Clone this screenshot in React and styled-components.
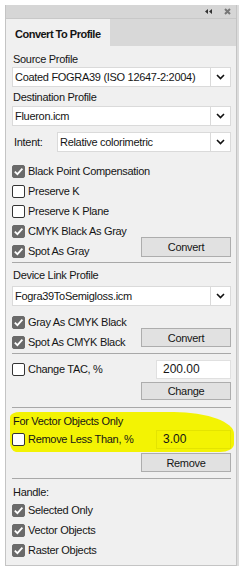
import React from "react";
import styled, { createGlobalStyle } from "styled-components";

const Global = createGlobalStyle`
  html, body { margin: 0; padding: 0; background: #ffffff; }
  body { font-family: "Liberation Sans", Arial, sans-serif; font-size: 11px; letter-spacing: -0.3px; color: #151515; }
`;

const Page = styled.div`
  padding: 5px 0 0 5px;
  width: 244px;
  height: 571px;
  box-sizing: border-box;
`;

const Panel = styled.div`
  width: 232px;
  height: 561px;
  box-sizing: border-box;
  border: 1px solid #c4c4c4;
  border-top: none;
  background: #f0f0f0;
  box-shadow: 2px 0 0 #dcdcdc;
  display: flex;
  flex-direction: column;
`;

const TitleBar = styled.div`
  height: 13px;
  flex: none;
  background: #d6d6d6;
  border-bottom: 1px solid #c8c8c8;
  display: flex;
  align-items: center;
  justify-content: flex-end;
  gap: 12px;
  padding-right: 5px;
`;

const TabStrip = styled.div`
  height: 27px;
  flex: none;
  background: #d8d8d8;
  display: flex;
`;

const Tab = styled.div`
  width: 104px;
  background: #f0f0f0;
  font-weight: 700;
  font-size: 11px;
  letter-spacing: -0.5px;
  display: flex;
  align-items: center;
  padding-left: 9px;
  box-sizing: border-box;
  padding-top: 2px;
  white-space: nowrap;
`;

const Content = styled.div`
  padding: 4px 5px 0 6px;
  display: flex;
  flex-direction: column;
  white-space: nowrap;
`;

const Label = styled.div`
  height: ${p => p.$h || 16}px;
  flex: none;
  display: flex;
  align-items: center;
  padding-left: 1px;
  margin-top: ${p => p.$mt || 0}px;
`;

const SelectBox = styled.div`
  height: 20px;
  flex: ${p => (p.$grow ? "1 1 0" : "none")};
  box-sizing: border-box;
  background: #fff;
  border: 1px solid #dadada;
  display: flex;
  align-items: stretch;
  margin-top: ${p => p.$mt || 0}px;
  min-width: 0;
`;

const SelectText = styled.div`
  flex: 1;
  min-width: 0;
  display: flex;
  align-items: center;
  padding-left: 2px;
  white-space: nowrap;
  overflow: hidden;
`;

const SelectArrow = styled.div`
  width: 19px;
  flex: none;
  border-left: 1px solid #dadada;
  display: flex;
  align-items: center;
  justify-content: center;
`;

const IntentRow = styled.div`
  display: flex;
  align-items: center;
  margin-top: 6px;
`;

const IntentLabel = styled.div`
  width: 45px;
  flex: none;
  padding-left: 2px;
  box-sizing: border-box;
`;

const CheckRow = styled.label`
  height: 20px;
  flex: none;
  display: flex;
  align-items: center;
  gap: 3px;
  white-space: nowrap;
`;

const Box = styled.span`
  width: 13px;
  height: 13px;
  flex: none;
  box-sizing: border-box;
  border-radius: 2px;
  display: inline-flex;
  align-items: center;
  justify-content: center;
  background: ${p => (p.$on ? "#6a6a6a" : "#ffffff")};
  border: 1px solid ${p => (p.$on ? "#6a6a6a" : "#333")};
`;

const Group = styled.div`
  display: grid;
  grid-template-columns: minmax(0, 1fr) 90px;
  align-items: end;
  margin-top: ${p => p.$mt || 0}px;
`;

const Button = styled.div`
  height: ${p => p.$h || 19}px;
  box-sizing: border-box;
  background: #e1e1e1;
  border: 1px solid #adadad;
  display: flex;
  align-items: center;
  justify-content: center;
  margin-bottom: ${p => p.$mb || 0}px;
`;

const ButtonRow = styled.div`
  display: flex;
  justify-content: flex-end;
  margin-top: ${p => p.$mt || 0}px;
  & > * { width: 90px; }
`;

const Sep = styled.div`
  height: 1px;
  flex: none;
  background: #a8a8a8;
  margin-top: ${p => p.$mt || 0}px;
`;

const InputRow = styled.div`
  display: grid;
  grid-template-columns: minmax(0, 1fr) 75px;
  align-items: center;
  margin-top: ${p => p.$mt || 0}px;
`;

const Input = styled.div`
  height: 19px;
  box-sizing: border-box;
  background: ${p => (p.$clear ? "transparent" : "#fff")};
  border: 1px solid ${p => (p.$clear ? "rgba(200,200,0,0.35)" : "#e0e0e0")};
  display: flex;
  align-items: center;
  padding-left: 6px;
  font-size: 12px;
  letter-spacing: 0;
`;

const HighlightZone = styled.div`
  position: relative;
`;

const Marker = styled.div`
  position: absolute;
  left: -2px;
  right: -3px;
  top: 4px;
  bottom: -3px;
  background: #f3f303;
  border-radius: 10px 60px 14px 6px / 5px 22px 8px 10px;
  filter: blur(0.6px);
  z-index: 0;
`;

const ZoneInner = styled.div`
  position: relative;
  z-index: 1;
`;

const Chevron = () => (
  <svg width="9" height="6" viewBox="0 0 9 6">
    <path d="M1 1 L4.5 4.5 L8 1" fill="none" stroke="#111" strokeWidth="1.6" />
  </svg>
);

const Check = () => (
  <svg width="11" height="11" viewBox="0 0 11 11">
    <path d="M1.8 5.6 L4.4 8.2 L9.4 2.6" fill="none" stroke="#fff" strokeWidth="1.8" />
  </svg>
);

const CB = ({ on, children }) => (
  <CheckRow>
    <Box $on={on}>{on && <Check />}</Box>
    <span>{children}</span>
  </CheckRow>
);

const Select = ({ children, mt, grow }) => (
  <SelectBox $mt={mt} $grow={grow}>
    <SelectText>{children}</SelectText>
    <SelectArrow>
      <Chevron />
    </SelectArrow>
  </SelectBox>
);

export default function App() {
  return (
    <>
      <Global />
      <Page>
        <Panel>
          <TitleBar>
            <svg width="7" height="5" viewBox="0 0 7 5">
              <path d="M3 0 L0 2.5 L3 5 Z M7 0 L4 2.5 L7 5 Z" fill="#333" />
            </svg>
            <svg width="7" height="7" viewBox="0 0 7 7">
              <path d="M1 1 L6 6 M6 1 L1 6" stroke="#777" strokeWidth="2" />
            </svg>
          </TitleBar>
          <TabStrip>
            <Tab>Convert To Profile</Tab>
          </TabStrip>
          <Content>
            <Label $h={17}>Source Profile</Label>
            <Select mt={0}>Coated FOGRA39 (ISO 12647-2:2004)</Select>
            <Label $mt={2}>Destination Profile</Label>
            <Select mt={1}>Flueron.icm</Select>
            <IntentRow>
              <IntentLabel>Intent:</IntentLabel>
              <Select grow>Relative colorimetric</Select>
            </IntentRow>
            <Group $mt={9}>
              <div>
                <CB on>Black Point Compensation</CB>
                <CB>Preserve K</CB>
                <CB>Preserve K Plane</CB>
                <CB on>CMYK Black As Gray</CB>
                <CB on>Spot As Gray</CB>
              </div>
              <Button $h={20} $mb={4}>Convert</Button>
            </Group>
            <Sep $mt={1} />
            <Label $mt={3} $h={17}>Device Link Profile</Label>
            <Select mt={3}>Fogra39ToSemigloss.icm</Select>
            <Group $mt={6}>
              <div>
                <CB on>Gray As CMYK Black</CB>
                <CB on>Spot As CMYK Black</CB>
              </div>
              <Button $mb={5}>Convert</Button>
            </Group>
            <Sep $mt={1} />
            <InputRow $mt={5}>
              <CB>Change TAC, %</CB>
              <Input>200.00</Input>
            </InputRow>
            <ButtonRow $mt={3}>
              <Button $h={18}>Change</Button>
            </ButtonRow>
            <Sep $mt={7} />
            <HighlightZone>
              <Marker />
              <ZoneInner>
                <Label $mt={4} $h={17}>For Vector Objects Only</Label>
                <InputRow $mt={0}>
                  <CB>Remove Less Than, %</CB>
                  <Input $clear>3.00</Input>
                </InputRow>
              </ZoneInner>
            </HighlightZone>
            <ButtonRow $mt={4}>
              <Button>Remove</Button>
            </ButtonRow>
            <Sep $mt={6} />
            <Label $mt={4} $h={17}>Handle:</Label>
            <CB on>Selected Only</CB>
            <CB on>Vector Objects</CB>
            <CB on>Raster Objects</CB>
          </Content>
        </Panel>
      </Page>
    </>
  );
}
